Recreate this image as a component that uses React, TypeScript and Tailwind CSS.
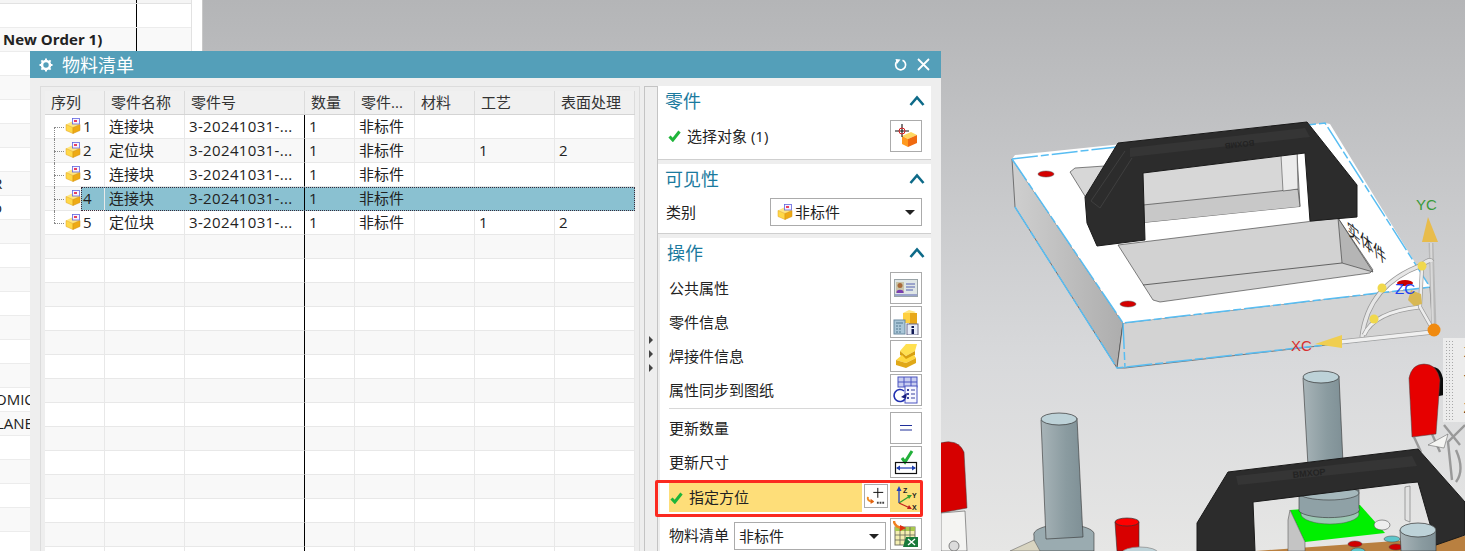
import React from "react";

const cjk = "font-['Open_Sans','Noto_Sans_CJK_SC',sans-serif]";

function Cube({ doc = true }: { doc?: boolean }) {
  return (
    <svg width="16" height="16" viewBox="0 0 16 16" className="block shrink-0">
      <polygon points="1,6.5 7,3.5 15,6.5 8,9.5" fill="#ffe680" />
      <polygon points="1,6.5 8,9.5 8,15.5 1,12.5" fill="#ffd848" stroke="#e0a020" strokeWidth="0.5" />
      <polygon points="8,9.5 15,6.5 15,12.5 8,15.5" fill="#eeaa14" stroke="#d09010" strokeWidth="0.5" />
      {doc && <rect x="7.5" y="0.5" width="7" height="5.5" fill="#f8f4ff" stroke="#6065e0" strokeWidth="0.8" />}
      {doc && <rect x="9" y="2" width="3" height="2" fill="#e84060" />}
    </svg>
  );
}

function Chevron() {
  return (
    <svg width="16" height="12" viewBox="0 0 16 12" className="block">
      <polyline points="1.5,10 8,2.5 14.5,10" fill="none" stroke="#0d6a88" strokeWidth="2.6" />
    </svg>
  );
}

function Check() {
  return (
    <svg width="13" height="12" viewBox="0 0 13 12" className="block shrink-0">
      <polyline points="1.5,6.5 4.8,10 11.5,1.5" fill="none" stroke="#1fb53a" strokeWidth="3" />
    </svg>
  );
}

function Caret() {
  return <span className="w-0 h-0 border-l-[5px] border-r-[5px] border-t-[5px] border-l-transparent border-r-transparent border-t-[#222]" />;
}

function IconButton({ children }: { children: React.ReactNode }) {
  return (
    <div className="w-[32px] h-[32px] border border-[#ababab] bg-white flex items-center justify-center shrink-0">
      {children}
    </div>
  );
}

const icons = {
  select: (
    <svg width="26" height="26" viewBox="0 0 26 26">
      <polygon points="9,13 18,9 24,12 15,16" fill="#ffd860" />
      <polygon points="9,13 15,16 15,24 9,21" fill="#ff9a20" />
      <polygon points="15,16 24,12 24,20 15,24" fill="#f06a10" />
      <path d="M9 1v13M2 8h14" stroke="#111" strokeWidth="1.1" />
      <circle cx="9" cy="8" r="3" fill="none" stroke="#d92020" strokeWidth="1" />
    </svg>
  ),
  card: (
    <svg width="24" height="18" viewBox="0 0 24 18">
      <rect x="0.5" y="0.5" width="23" height="17" fill="#dfe6e6" stroke="#9aa4a8" />
      <rect x="2" y="3" width="8" height="11" fill="#c9c4a8" />
      <circle cx="6" cy="6.5" r="2.5" fill="#a86a3a" />
      <path d="M2.5 13c0-3 7-3 7 0v1h-7z" fill="#7a3fb0" />
      <path d="M12 5h9M12 8h9M12 11h7" stroke="#5560b0" />
      <path d="M1 16h22" stroke="#5560b0" />
    </svg>
  ),
  info: (
    <svg width="26" height="26" viewBox="0 0 26 26">
      <polygon points="10,4 16,1 23,3 17,6" fill="#ffe680" />
      <rect x="16" y="4" width="8" height="14" fill="#e8a818" />
      <rect x="10" y="4" width="7" height="10" fill="#ffd040" />
      <rect x="1" y="11" width="11" height="14" fill="#a9c6d8" stroke="#6a8aa0" />
      <path d="M3 14h7M3 17h2M6 17h2M3 20h2M6 20h2M3 23h2M6 23h2" stroke="#53798f" />
      <rect x="14" y="15" width="11" height="11" fill="#e8ecf8" stroke="#6a6a8a" />
      <rect x="18.5" y="17" width="2.5" height="2" fill="#111a55" />
      <rect x="18.5" y="20" width="2.5" height="5" fill="#111a55" />
    </svg>
  ),
  weld: (
    <svg width="24" height="26" viewBox="0 0 24 26">
      <polygon points="6,8 12,1 23,1 21,8 12,13" fill="#ffe050" />
      <polygon points="6,8 12,13 21,8 21,12 12,17 6,12" fill="#d8a010" />
      <polygon points="2,17 8,12 12,16 20,12 22,15 12,20" fill="#ffd840" />
      <polygon points="2,17 12,20 22,15 22,20 12,25 2,22" fill="#e0a818" />
    </svg>
  ),
  sync: (
    <svg width="26" height="28" viewBox="0 0 26 28">
      <rect x="5" y="1" width="19" height="10" fill="#c8cdf0" stroke="#4a55c0" />
      <path d="M11 1v10M18 1v10M5 6h19" stroke="#4a55c0" />
      <rect x="12" y="10" width="12" height="17" fill="#f6f6ff" stroke="#4a55c0" />
      <path d="M18 14h4M18 18h4M18 22h4" stroke="#3a45a0" />
      <rect x="14" y="13" width="2" height="2" fill="#3a45a0" />
      <rect x="14" y="17" width="2" height="2" fill="#3a45a0" />
      <rect x="14" y="21" width="2" height="2" fill="#3a45a0" />
      <path d="M11 15a6 6 0 1 0 1 8" fill="none" stroke="#2030b0" strokeWidth="1.6" />
      <polygon points="8,21 14,17 13,23" fill="#1a2080" />
    </svg>
  ),
  equal: (
    <svg width="14" height="8" viewBox="0 0 14 8">
      <path d="M1 1.5h12M1 6h12" stroke="#20309a" strokeWidth="1.2" />
    </svg>
  ),
  size: (
    <svg width="24" height="26" viewBox="0 0 24 26">
      <polyline points="8,9 11,13 18,2" fill="none" stroke="#22b03a" strokeWidth="3" />
      <rect x="1.5" y="13.5" width="21" height="11" fill="none" stroke="#111" strokeWidth="1.2" />
      <path d="M3 19h18" stroke="#1f3fb0" strokeWidth="1.2" />
      <polygon points="2,19 6,16.5 6,21.5" fill="#1f3fb0" />
      <polygon points="22,19 18,16.5 18,21.5" fill="#1f3fb0" />
    </svg>
  ),
  plus: (
    <svg width="22" height="20" viewBox="0 0 22 20">
      <path d="M13 1v11M8 6h11" stroke="#111" strokeWidth="1.1" />
      <path d="M2 11c-1 4 3 6 6 5" fill="none" stroke="#f08a20" strokeWidth="2" />
      <polygon points="5,13 9,16 5,19" fill="#e06010" />
      <path d="M12 17.5h2M15 17.5h2M18 17.5h2" stroke="#444" strokeWidth="2" />
    </svg>
  ),
  axes: (
    <svg width="24" height="26" viewBox="0 0 24 26">
      <path d="M6 18V4" stroke="#2040c0" strokeWidth="1.3" />
      <polygon points="6,1 3.5,6 8.5,6" fill="#2040c0" />
      <path d="M6 18L17 11" stroke="#30a030" strokeWidth="1.3" />
      <polygon points="19,10 14,10 16,14" fill="#30a030" />
      <path d="M6 18L17 23" stroke="#c02020" strokeWidth="1.3" />
      <polygon points="19,24 14,24 16,20" fill="#c02020" />
      <text x="10" y="8" fontSize="7" fontWeight="700" fill="#222" fontFamily="Liberation Sans">Z</text>
      <text x="19" y="13" fontSize="7" fontWeight="700" fill="#222" fontFamily="Liberation Sans">Y</text>
      <text x="19" y="25" fontSize="7" fontWeight="700" fill="#222" fontFamily="Liberation Sans">X</text>
    </svg>
  ),
  excel: (
    <svg width="26" height="28" viewBox="0 0 26 28">
      <rect x="2" y="7" width="20" height="18" fill="#f4eeb0" stroke="#776" />
      <rect x="2" y="7" width="20" height="4" fill="#a8c850" />
      <path d="M7 7v18M12 7v18M17 7v18M2 15h20M2 20h20" stroke="#665" strokeWidth="0.8" />
      <path d="M1 1c0 5 5 7 9 7" fill="none" stroke="#f08020" strokeWidth="2.4" />
      <polygon points="7,5 13,8 7,11" fill="#e03010" />
      <polygon points="13,17 25,17 25,27 10,27" fill="#187a3a" />
      <path d="M15 19l7 6M22 19l-7 6" stroke="#fff" strokeWidth="1.4" />
    </svg>
  ),
};

const rows = [
  ["1", "连接块", "1", "", "", false],
  ["2", "定位块", "1", "1", "2", false],
  ["3", "连接块", "1", "", "", false],
  ["4", "连接块", "1", "", "", true],
  ["5", "定位块", "1", "1", "2", false],
] as const;

const headers = ["序列", "零件名称", "零件号", "数量", "零件...", "材料", "工艺", "表面处理"];
const gridCols = "grid grid-cols-[60px_80px_120px_50px_60px_60px_80px_80px]";

function Table() {
  const empties = Array.from({ length: 15 }, (_, i) => i + 5);
  return (
    <div className="w-[590px] bg-white h-full overflow-hidden">
      <div className={`${gridCols} h-[24px] bg-[#f0f0f0] border-b border-[#d4d4d4]`}>
        {headers.map((h) => (
          <div key={h} className="px-[6px] flex items-center border-r border-[#dcdcdc] text-[15px] text-[#333] whitespace-nowrap">
            {h}
          </div>
        ))}
      </div>
      {rows.map((r, i) => {
        const sel = r[5];
        const base = `h-[24px] flex items-center border-b border-r whitespace-nowrap text-[15px] text-[#222] pl-[4px] ${
          sel ? "bg-[#8ac1d1] border-[#8ac1d1]" : i % 2 === 1 ? "bg-[#f8f8f8] border-[#e8e8e8]" : "bg-white border-[#e8e8e8]"
        }`;
        return (
          <div key={i} className={`${gridCols} relative`}>
            <div className={`relative h-[24px] flex items-center border-b border-r border-[#e8e8e8] ${i % 2 === 1 ? "bg-[#f8f8f8]" : "bg-white"}`}>
              <div className={`absolute top-0 bottom-[-1px] left-[9px] border-l border-dotted border-[#888] ${i === 0 ? "top-[12px]" : ""} ${i === 4 ? "bottom-[11px]" : ""}`} />
              <div className="absolute left-[9px] w-[10px] top-[12px] border-t border-dotted border-[#888]" />
              <div className="ml-[20px] mt-[-2px]"><Cube /></div>
              <div className={`flex-1 h-full flex items-center pl-[2px] text-[15px] text-[#222] ${sel ? "bg-[#8ac1d1]" : ""}`}>{r[0]}</div>
            </div>
            <div className={base}>{r[1]}</div>
            <div className={`${base} tracking-[0.35px] !border-r-black`}>3-20241031-...</div>
            <div className={base}>{r[2]}</div>
            <div className={base}>非标件</div>
            <div className={base}></div>
            <div className={base}>{r[3]}</div>
            <div className={base}>{r[4]}</div>
            {sel && <div className="absolute left-[36px] right-0 top-0 h-[24px] border border-dotted border-[#3a2a3a] pointer-events-none" />}
          </div>
        );
      })}
      {empties.map((i) => (
        <div key={i} className={`${gridCols} h-[24px] ${i % 2 === 1 ? "bg-[#f8f8f8]" : "bg-white"}`}>
          {headers.map((h, c) => (
            <div key={h} className={`border-b border-r border-[#e8e8e8] ${c === 2 ? "!border-r-black" : ""}`} />
          ))}
        </div>
      ))}
    </div>
  );
}

function SectionHead({ title }: { title: string }) {
  return (
    <div className="h-[30px] flex items-center justify-between pl-[7px] pr-[6px]">
      <span className="text-[18px] leading-none text-[#1b7a9e]">{title}</span>
      <Chevron />
    </div>
  );
}

function ActionRow({ label, icon }: { label: string; icon: React.ReactNode }) {
  return (
    <div className="flex items-center justify-between h-[34px] pl-[11px] pr-[9px]">
      <span className="text-[15px] text-[#222]">{label}</span>
      <IconButton>{icon}</IconButton>
    </div>
  );
}

function Panel() {
  return (
    <div className="flex flex-col w-[273px] h-full gap-[4px]">
      <section className="bg-white h-[74px] shrink-0 border-b border-[#cfcfcf]">
        <SectionHead title="零件" />
        <div className="flex items-center h-[32px] mt-[4px] pl-[10px] pr-[9px]">
          <Check />
          <span className="ml-[6px] text-[15px] text-[#222]">选择对象 (1)</span>
          <div className="ml-auto"><IconButton>{icons.select}</IconButton></div>
        </div>
      </section>
      <section className="bg-white h-[70px] shrink-0 border-b border-[#cfcfcf]">
        <SectionHead title="可见性" />
        <div className="flex items-center justify-between pl-[8px] pr-[9px] mt-[4px]">
          <span className="text-[15px] text-[#222]">类别</span>
          <div className="w-[152px] h-[28px] border border-[#ababab] flex items-center pl-[6px] pr-[6px] gap-[2px]">
            <Cube />
            <span className="text-[15px] text-[#222]">非标件</span>
            <span className="ml-auto flex"><Caret /></span>
          </div>
        </div>
      </section>
      <section className="bg-white flex-1 ml-[2px]">
        <SectionHead title="操作" />
        <div className="mt-[3px] -ml-[2px]">
          <ActionRow label="公共属性" icon={icons.card} />
          <ActionRow label="零件信息" icon={icons.info} />
          <ActionRow label="焊接件信息" icon={icons.weld} />
          <ActionRow label="属性同步到图纸" icon={icons.sync} />
          <div className="ml-[11px] mr-[9px] border-t border-[#d8d8d8] mt-[1px] mb-[2px]" />
          <ActionRow label="更新数量" icon={icons.equal} />
          <ActionRow label="更新尺寸" icon={icons.size} />
          <div className="ml-[-3px] w-[268px] mt-[1px] h-[37px] border-[3px] border-[#fb2a20] rounded-[2px] flex items-start pl-[11px]">
            <div className="w-[193px] h-[29px] bg-[#fede79] flex items-center pl-[1px] shrink-0">
              <Check />
              <span className="ml-[6px] text-[15px] text-[#222]">指定方位</span>
            </div>
            <div className="ml-[2px] mt-[1px] w-[24px] h-[24px] border border-[#ababab] flex items-center justify-center shrink-0"><div className="scale-90">{icons.plus}</div></div>
            <div className="ml-[2px] w-[30px] h-[29px] bg-[#fede79] flex items-center justify-center shrink-0">{icons.axes}</div>
          </div>
          <div className="flex items-start pl-[11px] mt-[1px]">
            <span className="text-[15px] text-[#222] mt-[6px]">物料清单</span>
            <div className="w-[152px] h-[28px] border border-[#ababab] flex items-center pl-[4px] pr-[6px] ml-[5px] mt-[4px]">
              <span className="text-[15px] text-[#222]">非标件</span>
              <span className="ml-auto flex"><Caret /></span>
            </div>
            <div className="ml-[4px]"><IconButton>{icons.excel}</IconButton></div>
          </div>
        </div>
      </section>
    </div>
  );
}

function Dialog() {
  return (
    <div className={`absolute left-[30px] top-[51px] bottom-0 w-[911px] bg-[#eeeeee] flex flex-col overflow-hidden ${cjk}`}>
      <div className="h-[27px] shrink-0 bg-[#549fb9] flex items-center pl-[9px] pr-[11px] text-white">
        <svg width="14" height="14" viewBox="0 0 14 14" className="block">
          <circle cx="7" cy="7" r="4" fill="none" stroke="#fff" strokeWidth="2.6" />
          <path d="M7 0.5v2.4M7 11.1v2.4M0.5 7h2.4M11.1 7h2.4M2.4 2.4l1.7 1.7M9.9 9.9l1.7 1.7M2.4 11.6l1.7-1.7M9.9 4.1l1.7-1.7" stroke="#fff" strokeWidth="2" />
        </svg>
        <span className="ml-[9px] text-[18px] leading-none">物料清单</span>
        <div className="ml-auto flex items-center gap-[9px]">
          <svg width="14" height="14" viewBox="0 0 14 14">
            <path d="M8.5 2.2A5 5 0 1 1 3 3.4" fill="none" stroke="#fff" strokeWidth="1.7" />
            <polygon points="1.5,1 6.5,1.5 3,6" fill="#fff" />
          </svg>
          <svg width="13" height="13" viewBox="0 0 13 13">
            <path d="M1 1l11 11M12 1L1 12" stroke="#fff" strokeWidth="1.8" />
          </svg>
        </div>
      </div>
      <div className="flex flex-1 min-h-0 pt-[8px] pl-[10px]">
        <div className="w-[600px] shrink-0 border-l border-t border-r border-[#dcdcdc] pl-[4px] pt-[4px] pr-[4px]">
          <Table />
        </div>
        <div className="ml-[4px] w-[14px] shrink-0 border-l border-t border-r border-[#c4c4c4] flex flex-col items-center justify-center gap-[6px] pt-[69px]">
          {[0, 1, 2].map((i) => (
            <span key={i} className="w-0 h-0 border-t-[4px] border-b-[4px] border-l-[4px] border-t-transparent border-b-transparent border-l-[#444]" />
          ))}
        </div>
        <Panel />
      </div>
    </div>
  );
}

function Sheet() {
  const labels: Record<number, React.ReactNode> = {
    1: <span className="ml-[3px] font-bold text-[15px] text-[#222]">New Order 1)</span>,
    7: <span className="ml-[-7px] text-[15px] text-[#222]">R</span>,
    8: <span className="ml-[-7px] text-[15px] text-[#222]">o</span>,
    16: <span className="ml-[-5px] text-[15px] text-[#222] whitespace-nowrap">OMIC</span>,
    17: <span className="ml-[-4px] text-[15px] text-[#222] whitespace-nowrap">LANE</span>,
  };
  return (
    <div className="w-[203px] h-full shrink-0 bg-white border-r border-[#c8c8c8] overflow-hidden font-['Open_Sans',sans-serif]">
      <div className="w-[192px] border-r border-[#e2e2e2]">
        <div className="h-[4px] bg-[#f5f5f5] border-b border-[#e2e2e2] flex"><div className="w-[137px] border-r border-black" /></div>
        {Array.from({ length: 23 }, (_, i) => (
          <div key={i} className={`h-[24px] border-b border-[#ececec] flex ${i % 2 === 1 ? "bg-[#f9f9f9]" : "bg-white"}`}>
            <div className="w-[137px] border-r border-black flex items-center overflow-visible whitespace-nowrap">{labels[i]}</div>
          </div>
        ))}
      </div>
    </div>
  );
}

function Scene() {
  return (
    <svg viewBox="203 0 1262 551" className="block w-full h-full">
      <defs>
        <linearGradient id="cyl" x1="0" x2="1" y1="0" y2="0">
          <stop offset="0" stopColor="#a8b4b8" />
          <stop offset="0.6" stopColor="#8a9ba0" />
          <stop offset="1" stopColor="#7f9096" />
        </linearGradient>
        <linearGradient id="leftFace" x1="0" x2="1" y1="0" y2="0">
          <stop offset="0" stopColor="#cfcfcf" />
          <stop offset="1" stopColor="#adadad" />
        </linearGradient>
      </defs>

      {/* upper plate */}
      <polygon points="1012,159 1123,323 1117,368 1015,207" fill="url(#leftFace)" stroke="#333" strokeWidth="0.6" />
      <polygon points="1123,323 1430,287 1433,333 1125,368 1117,368" fill="#d3d3d3" stroke="#333" strokeWidth="0.6" />
      <polygon points="1012,159 1015,155 1325,123 1330,124 1430,287 1123,323" fill="#ffffff" />
      <path d="M1012,159L1325,123L1430,287M1012,159L1123,323L1430,287M1015,207L1117,368L1433,333M1123,323L1125,368" fill="none" stroke="#58bdf2" strokeWidth="1.5" strokeDasharray="26 3 8 3" />
      <polygon points="1070,172 1075,168 1297,153 1300,206 1143,223 1143,240 1106,230" fill="#d7d7d7" stroke="#333" strokeWidth="0.6" />
      <polygon points="1143,205 1298,189 1300,207 1143,223" fill="#c8c8c8" stroke="#333" strokeWidth="0.6" />
      <polygon points="1143,223 1300,207 1312,221 1338,218 1145,240" fill="#ffffff" />
      <polygon points="1118,245 1338,218 1373,270 1370,273 1160,302 1153,300" fill="#d2d2d2" stroke="#333" strokeWidth="0.6" />
      <polygon points="1338,218 1342,263 1373,272" fill="#b5b5b5" stroke="#333" strokeWidth="0.6" />
      <path d="M1143,285L1342,263" stroke="#333" strokeWidth="0.7" />
      <polygon points="1281,155 1297,153 1298,189 1283,191" fill="#ebebeb" stroke="#333" strokeWidth="0.5" />

      {/* handle */}
      <polygon points="1118,143 1307,122 1357,185 1357,217 1310,221 1305,153 1143,173 1145,240 1097,246 1087,223 1085,197" fill="#2c2c2c" stroke="#1a1a1a" />
      <polygon points="1130,148 1305,128 1310,137 1130,157" fill="#353535" />
      <path d="M1125,151L1091,201L1100,208L1132,158" fill="none" stroke="#3f3f3f" />
      <text x="0" y="0" transform="translate(1254,140) rotate(173.5)" fontSize="8" fontWeight="700" fill="#232323" fontFamily="Liberation Sans">BOXMB</text>

      {/* holes */}
      <ellipse cx="1046" cy="174" rx="8" ry="3" fill="#d40000" stroke="#555" strokeWidth="0.5" />
      <ellipse cx="1128" cy="304" rx="8" ry="3" fill="#d40000" stroke="#555" strokeWidth="0.5" />
      <ellipse cx="1405" cy="283" rx="8" ry="3" fill="#c80000" />

      {/* engraved marking */}
      <text transform="matrix(0.72,0.58,0.12,1,1348,234)" fontSize="18" fill="#222" fontFamily="Noto Sans CJK SC">实体件</text>

      {/* gizmo */}
      <path d="M1431,243L1434,328" stroke="#b8b8b8" strokeWidth="5" />
      <path d="M1431,243L1433,328" stroke="#d8d8d8" strokeWidth="2" />
      <path d="M1362,337Q1368,285 1422,265Q1430,258 1432,262" fill="none" stroke="#9a9a9a" strokeWidth="5" />
      <path d="M1362,337Q1368,285 1422,265Q1430,258 1432,262" fill="none" stroke="#e6e6e6" strokeWidth="3.4" />
      <path d="M1364,335Q1374,312 1420,307" fill="none" stroke="#9a9a9a" strokeWidth="4.4" />
      <path d="M1364,335Q1374,312 1420,307" fill="none" stroke="#efefef" strokeWidth="3" />
      <path d="M1422,267L1420,307L1432,328" fill="none" stroke="#9a9a9a" strokeWidth="4" />
      <path d="M1422,267L1420,307L1432,328" fill="none" stroke="#ececec" strokeWidth="2.6" />
      <path d="M1433,332L1340,342" stroke="#a0a0a0" strokeWidth="5" />
      <path d="M1433,332L1340,342" stroke="#f0f0f0" strokeWidth="3.4" />
      <polygon points="1428,217 1422,242 1438,242" fill="#e8bc4c" />
      <polygon points="1315,344 1342,335 1342,348" fill="#f0ce50" />
      <polygon points="1411,290 1421,294 1422,304 1414,306 1408,300" fill="#d8b854" />
      <circle cx="1422" cy="266" r="4.5" fill="#f0d84c" />
      <circle cx="1382" cy="288" r="4.5" fill="#f0d84c" />
      <circle cx="1374" cy="319" r="4.5" fill="#f0d84c" />
      <circle cx="1434" cy="330" r="6.5" fill="#f08a10" />
      <text x="1416" y="210" fontSize="15" fill="#3a9a3a" fontFamily="Liberation Sans">YC</text>
      <text x="1291" y="351" fontSize="15" fill="#d83030" fontFamily="Liberation Sans">XC</text>
      <text x="1395" y="294" fontSize="15" fill="#2040f0" fontFamily="Liberation Sans">ZC</text>

      {/* tall cylinders */}
      <path d="M1034,536A30,10 0 0 1 1094,533L1094,551H1034Z" fill="#9aabb0" stroke="#333" strokeWidth="0.6" />
      <polygon points="1041,420 1077,418 1083,537 1046,539" fill="url(#cyl)" stroke="#333" strokeWidth="0.6" />
      <ellipse cx="1059" cy="419" rx="18" ry="6" fill="#bdd2d8" stroke="#333" strokeWidth="0.7" />
      <polygon points="1303,378 1339,376 1343,463 1308,466" fill="url(#cyl)" stroke="#333" strokeWidth="0.6" />
      <ellipse cx="1321" cy="377" rx="18" ry="6" fill="#bdd2d8" stroke="#333" strokeWidth="0.7" />

      {/* left clamp */}
      <path d="M940,443Q958,438 964,452L967,508L940,513Z" fill="#d60000" stroke="#444" strokeWidth="0.5" />
      <polygon points="941,513 965,511 967,551 941,551" fill="#f4f4f2" stroke="#555" strokeWidth="0.6" />
      <circle cx="954" cy="546" r="5" fill="#dcdcdc" stroke="#666" strokeWidth="0.8" />
      <polygon points="1010,551 1034,540 1040,551" fill="#d8d4c0" stroke="#555" strokeWidth="0.5" />

      {/* small red */}
      <polygon points="1115,522 1139,522 1139,551 1117,551" fill="#d80000" stroke="#333" strokeWidth="0.6" />
      <ellipse cx="1127" cy="522" rx="12" ry="4" fill="#ff0000" stroke="#333" strokeWidth="0.7" />
      <ellipse cx="1140" cy="553" rx="18" ry="6" fill="#bdd2d8" stroke="#888" strokeWidth="0.7" />

      {/* right clamp */}
      <path d="M1414,437L1421,452M1432,434L1440,452M1444,425L1460,445M1465,425L1448,442L1452,480M1456,450Q1465,470 1456,482" fill="none" stroke="#999" strokeWidth="2.4" />
      <polygon points="1428,445 1448,434 1444,448" fill="#f4f4f2" stroke="#555" strokeWidth="0.5" />
      <path d="M1428,368Q1445,362 1444,395L1434,397Z" fill="#0a0a0a" />
      <path d="M1409,378Q1412,364 1424,364Q1437,364 1440,380L1436,434L1412,437Z" fill="#e60000" stroke="#444" strokeWidth="0.5" />

      {/* lower assembly */}
      <polygon points="1255,551 1465,536 1465,551" fill="#b98040" />
      <polygon points="1290,510 1360,505 1385,533 1305,542" fill="#00f000" />
      <polygon points="1290,510 1305,542 1305,551 1288,551 1288,520" fill="#c4c4c4" stroke="#444" strokeWidth="0.5" />
      <ellipse cx="1330" cy="514" rx="29" ry="10" fill="#9cc7b4" stroke="#555" strokeWidth="0.5" />
      <path d="M1299,493L1299,511A30,8 0 0 0 1359,508L1359,490Z" fill="#8fa1a6" stroke="#333" strokeWidth="0.6" />
      <ellipse cx="1329" cy="493" rx="30" ry="7" fill="#a5b8bc" stroke="#333" strokeWidth="0.6" />
      <polygon points="1405,487 1410,486 1410,522 1405,520" fill="#e2e2e2" stroke="#555" strokeWidth="0.5" />
      <ellipse cx="1382" cy="525" rx="8" ry="5" fill="#eeeeee" stroke="#555" strokeWidth="0.6" />
      <polygon points="1197,523 1228,472 1418,449 1465,502 1465,535 1436,545 1418,482 1407,483 1253,502 1255,551 1197,551" fill="#2c2c2c" stroke="#1a1a1a" />
      <polygon points="1236,476 1412,456 1417,466 1238,485" fill="#353535" />
      <text x="0" y="0" transform="translate(1293,478) rotate(-6)" fontSize="9" fontWeight="700" fill="#232323" fontFamily="Liberation Sans">BMXOP</text>
      <ellipse cx="1355" cy="544" rx="7" ry="3" fill="#d00000" stroke="#444" strokeWidth="0.5" />
      <ellipse cx="1392" cy="539" rx="8" ry="3" fill="#5fc7cc" stroke="#444" strokeWidth="0.5" />
      <ellipse cx="1396" cy="547" rx="7" ry="3" fill="#d00000" stroke="#444" strokeWidth="0.5" />
      <ellipse cx="1358" cy="551" rx="7" ry="3" fill="#5fc7cc" stroke="#444" strokeWidth="0.5" />
      <polygon points="1400,530 1436,530 1436,551 1401,551" fill="url(#cyl)" stroke="#333" strokeWidth="0.6" />
      <ellipse cx="1418" cy="530" rx="18" ry="7" fill="#bdd2d8" stroke="#333" strokeWidth="0.7" />
    </svg>
  );
}

function FloatPanel() {
  return (
    <div className="absolute left-[1240px] top-[338px] w-[30px] h-[84px] bg-[#ececec] flex font-['Liberation_Sans',sans-serif]">
      <div className="w-[10px] ml-[2px] my-[2px] bg-[radial-gradient(#a8a8a8_1px,transparent_1px)] bg-[length:3px_3px]" />
      <div className="ml-[9px] flex flex-col justify-around text-[14px] leading-none text-[#222]">
        <span>X</span>
        <span>Y</span>
        <span>Z</span>
      </div>
    </div>
  );
}

export default function App() {
  return (
    <div className="relative flex h-screen w-full overflow-hidden bg-white">
      <Sheet />
      <div className="relative flex-1 h-full overflow-hidden bg-[linear-gradient(180deg,#b4b5b7_0%,#d8d9db_65%,#e6e6e5_100%)]">
        <Scene />
        <FloatPanel />
      </div>
      <Dialog />
    </div>
  );
}
